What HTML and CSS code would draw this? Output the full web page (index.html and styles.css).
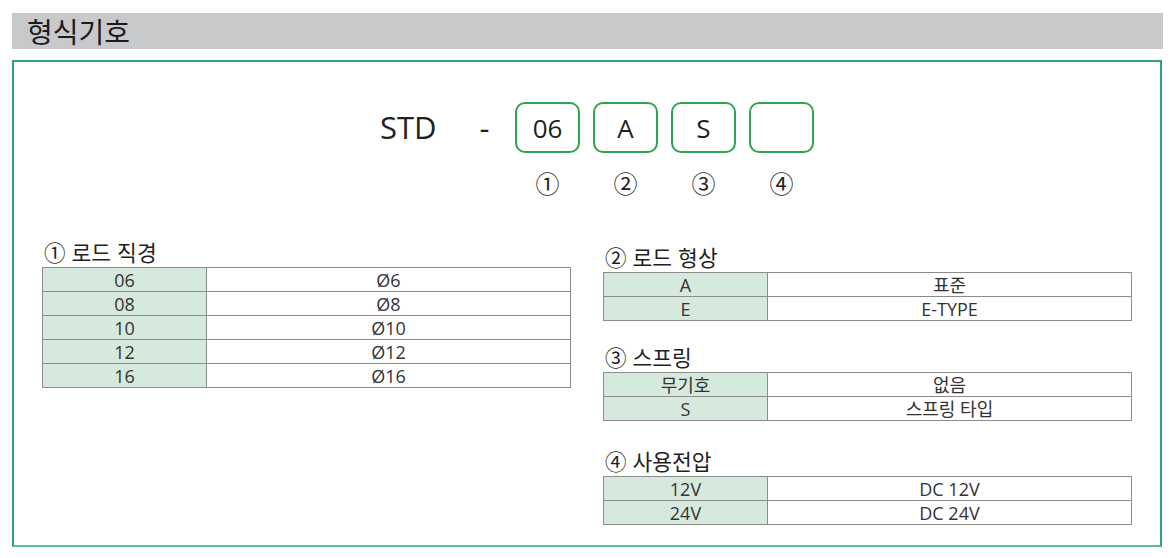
FILE: index.html
```html
<!DOCTYPE html>
<html lang="ko">
<head>
<meta charset="utf-8">
<link rel="stylesheet" href="styles.css">
</head>
<body>
<div class="page">
  <div class="title">형식기호</div>
  <div class="panel">
    <div class="code">
      <div class="lead"><span class="prefix">STD</span><span class="dash">-</span></div>
      <div class="slot">06</div>
      <div class="slot">A</div>
      <div class="slot">S</div>
      <div class="slot"></div>
      <div></div>
      <div class="num">①</div>
      <div class="num">②</div>
      <div class="num">③</div>
      <div class="num">④</div>
    </div>
    <div class="specs">
      <div class="col">
        <div class="section">
          <div class="head">① 로드 직경</div>
          <table class="tbl">
            <tr><td class="key">06</td><td>Ø6</td></tr>
            <tr><td class="key">08</td><td>Ø8</td></tr>
            <tr><td class="key">10</td><td>Ø10</td></tr>
            <tr><td class="key">12</td><td>Ø12</td></tr>
            <tr><td class="key">16</td><td>Ø16</td></tr>
          </table>
        </div>
      </div>
      <div class="col right">
        <div class="section">
          <div class="head">② 로드 형상</div>
          <table class="tbl">
            <tr><td class="key">A</td><td>표준</td></tr>
            <tr><td class="key">E</td><td>E-TYPE</td></tr>
          </table>
        </div>
        <div class="section">
          <div class="head">③ 스프링</div>
          <table class="tbl">
            <tr><td class="key">무기호</td><td>없음</td></tr>
            <tr><td class="key">S</td><td>스프링 타입</td></tr>
          </table>
        </div>
        <div class="section">
          <div class="head">④ 사용전압</div>
          <table class="tbl">
            <tr><td class="key">12V</td><td>DC 12V</td></tr>
            <tr><td class="key">24V</td><td>DC 24V</td></tr>
          </table>
        </div>
      </div>
    </div>
  </div>
</div>
</body>
</html>
```
FILE: styles.css
```css
* { box-sizing: border-box; }
html, body { margin: 0; padding: 0; background: #ffffff; }
body {
  font-family: "Open Sans", "Noto Sans CJK KR", sans-serif;
  color: #231f20;
}
.page {
  padding: 13px 0 0 12px;
  width: 1170px;
}
.title {
  width: 1151px;
  height: 36px;
  background: #c8c9cb;
  padding-left: 15px;
  font-family: "Noto Sans CJK KR", sans-serif;
  font-size: 28px;
  line-height: 36px;
  color: #1e1a1b;
}
.panel {
  margin-top: 11px;
  width: 1150px;
  height: 487px;
  border: 2px solid #35a271;
  border-bottom-color: #5cbd8f;
}
.code {
  display: grid;
  grid-template-columns: 122px repeat(4, 65px);
  column-gap: 13px;
  row-gap: 17px;
  margin: 40px 0 0 366px;
  align-items: center;
}
.lead {
  display: flex;
  align-items: center;
  height: 51px;
}
.prefix {
  font-size: 31px;
  line-height: 51px;
  color: #231f20;
}
.dash {
  margin-left: 43px;
  font-size: 31px;
  line-height: 51px;
}
.slot {
  height: 51px;
  border: 2px solid #2aa74b;
  border-radius: 10px;
  display: flex;
  align-items: center;
  justify-content: center;
  font-size: 26px;
  color: #231f20;
}
.num {
  text-align: center;
  font-family: "Noto Sans CJK KR", sans-serif;
  font-size: 24px;
  line-height: 26px;
  color: #231f20;
}
.specs {
  display: grid;
  grid-template-columns: 529px 529px;
  column-gap: 32px;
  margin: 43px 0 0 28px;
}
.right { padding-top: 5px; }
.section:nth-child(2) { margin-top: 23px; }
.section:nth-child(3) { margin-top: 27px; }
.head {
  font-family: "Noto Sans CJK KR", sans-serif;
  font-size: 21.5px;
  line-height: 26px;
  height: 28px;
  padding-left: 2px;
  color: #231f20;
}
.tbl {
  width: 529px;
  border-collapse: collapse;
  font-size: 18px;
  color: #333333;
}
.tbl td {
  border: 1px solid #8c8c8c;
  height: 24px;
  padding: 0;
  text-align: center;
  line-height: 22px;
}
.tbl td.key {
  width: 164px;
  background: #d6e9dd;
}
```
